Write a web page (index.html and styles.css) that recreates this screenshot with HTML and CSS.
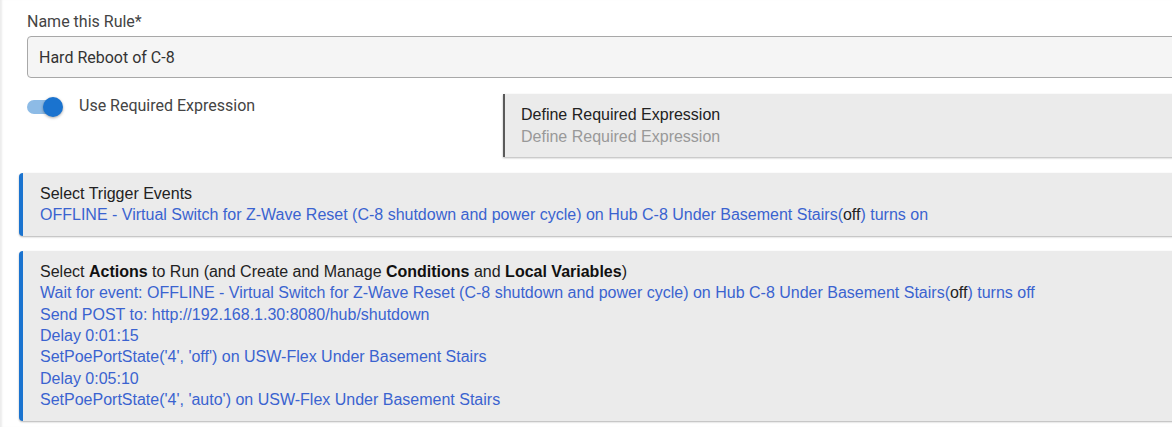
FILE: index.html
```html
<!DOCTYPE html>
<html lang="en">
<head>
    <meta charset="UTF-8">
    <title>Hard Reboot of C-8</title>
    <link rel="stylesheet" href="styles.css">
</head>
<body>
    <div id="page">
        <div class="name-field">
            <label class="field-label" for="rule-name">Name this Rule*</label>
            <input type="text" id="rule-name" class="field-input" value="Hard Reboot of C-8">
        </div>

        <div class="expr-row">
            <div class="expr-left">
                <span class="switch"><span class="switch-track"></span><span class="switch-knob"></span></span>
                <span class="switch-label">Use Required Expression</span>
            </div>
            <div class="expr-box">
                <div class="expr-title">Define Required Expression</div>
                <div class="expr-sub">Define Required Expression</div>
            </div>
        </div>

        <div class="section">
            <div class="section-title">Select Trigger Events</div>
            <div class="link">OFFLINE - Virtual Switch for Z-Wave Reset (C-8 shutdown and power cycle) on Hub C-8 Under Basement Stairs(<span class="state">off</span>) turns on</div>
        </div>

        <div class="section">
            <div class="section-title">Select <b>Actions</b> to Run (and Create and Manage <b>Conditions</b> and <b>Local Variables</b>)</div>
            <div class="link">Wait for event: OFFLINE - Virtual Switch for Z-Wave Reset (C-8 shutdown and power cycle) on Hub C-8 Under Basement Stairs(<span class="state">off</span>) turns off</div>
            <div class="link">Send POST to: http://192.168.1.30:8080/hub/shutdown</div>
            <div class="link">Delay 0:01:15</div>
            <div class="link">SetPoePortState('4', 'off') on USW-Flex Under Basement Stairs</div>
            <div class="link">Delay 0:05:10</div>
            <div class="link">SetPoePortState('4', 'auto') on USW-Flex Under Basement Stairs</div>
        </div>
    </div>
</body>
</html>
```

FILE: styles.css
```css
html, body {
    margin: 0;
    padding: 0;
    background: #fff;
    overflow: hidden;
}

#page {
    width: 1200px;
    min-height: 427px;
    padding: 13px 0 0 19px;
    box-sizing: border-box;
    box-shadow: inset 3px 0 2px -1px #ececec;
    font-family: "Liberation Sans", Arial, sans-serif;
    font-size: 16px;
}

.name-field {
    padding-left: 8px;
}

.field-label {
    display: block;
    font-family: Roboto, sans-serif;
    font-size: 16px;
    line-height: 18px;
    color: #444;
    margin-bottom: 5px;
}

.field-input {
    display: block;
    width: 100%;
    height: 42px;
    box-sizing: border-box;
    padding: 0 11px;
    border: 1px solid #a8a8a8;
    border-radius: 4px;
    background: #f5f5f5;
    font-family: Roboto, sans-serif;
    font-size: 16px;
    color: #333;
}

.expr-row {
    display: flex;
    margin-top: 16px;
}

.expr-left {
    width: 484px;
    display: flex;
    align-items: flex-start;
    padding: 3px 0 0 8px;
    box-sizing: border-box;
}

.switch {
    position: relative;
    width: 36px;
    height: 20px;
    margin-right: 16px;
}

.switch-track {
    position: absolute;
    left: 0;
    top: 3px;
    width: 30px;
    height: 14px;
    border-radius: 7px;
    background: #8dbbe6;
}

.switch-knob {
    position: absolute;
    left: 16px;
    top: 0;
    width: 20px;
    height: 20px;
    border-radius: 50%;
    background: #1a73cf;
    box-shadow: 0 1px 3px rgba(0, 0, 0, 0.35);
}

.switch-label {
    font-family: Roboto, sans-serif;
    font-size: 16px;
    line-height: 18px;
    color: #444;
}

.expr-box {
    flex: 1;
    background: #ebebeb;
    border-left: 2px solid #5a5a5a;
    padding: 10px 16px 9px;
    box-shadow: 0 1px 2px rgba(0, 0, 0, 0.3);
    line-height: 22px;
}

.expr-title {
    color: #222;
}

.expr-sub {
    color: #999;
}

.section {
    margin-top: 16px;
    background: #ebebeb;
    border-left: 4px solid #1a73cf;
    border-radius: 4px 0 0 4px;
    padding: 10px 17px 10px;
    box-shadow: 0 1px 2px rgba(0, 0, 0, 0.3);
    line-height: 21.4px;
}

.section + .section {
    margin-top: 15px;
}

.section-title {
    color: #222;
}

.section-title b {
    color: #111;
}

.link {
    color: #3a63d0;
}

.state {
    color: #222;
}
```
